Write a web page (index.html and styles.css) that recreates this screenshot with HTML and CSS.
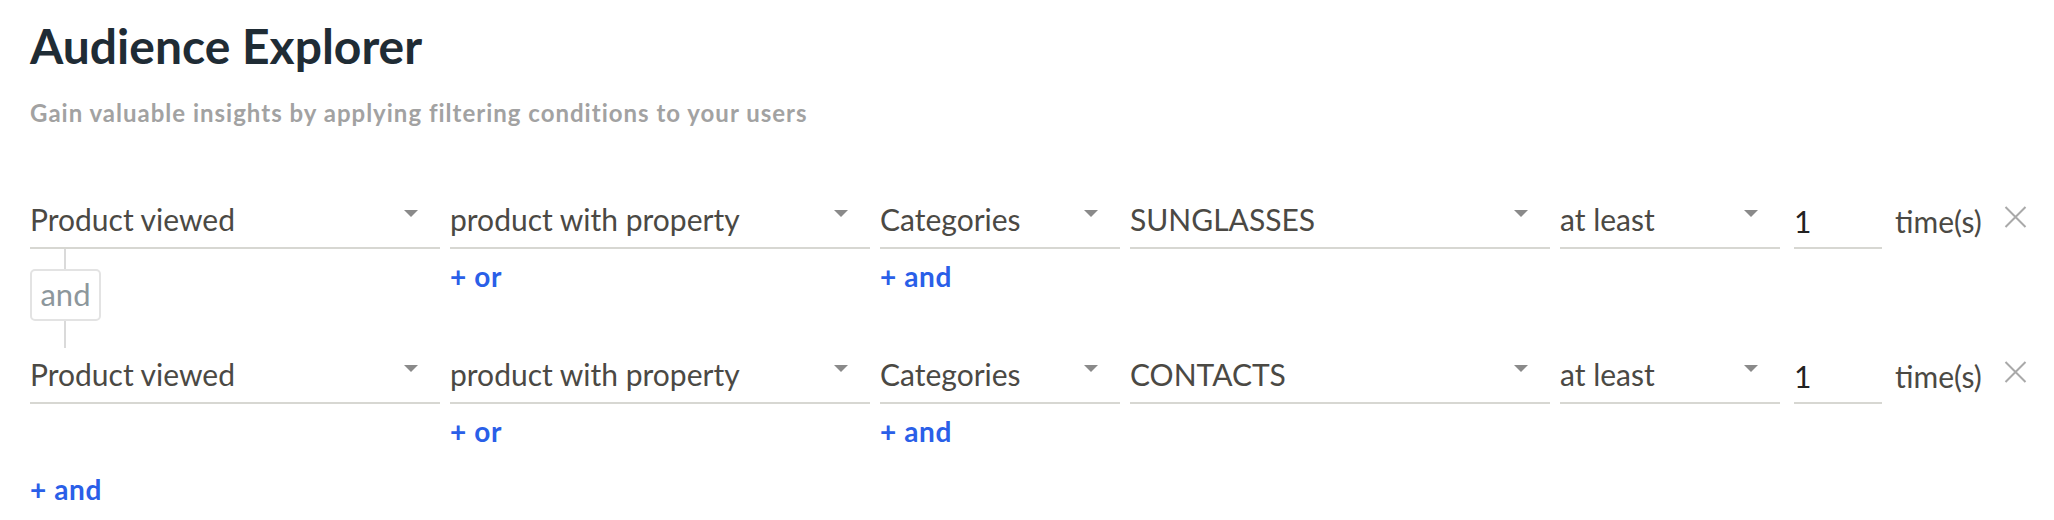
FILE: index.html
```html
<!DOCTYPE html>
<html lang="en">

<head>
    <meta charset="UTF-8">
    <meta name="viewport" content="width=device-width, initial-scale=1.0">
    <title>Audience Explorer</title>
    <link rel="stylesheet" href="styles.css">
</head>

<body>
    <div class="page">
        <h1 class="title">Audience Explorer</h1>
        <p class="subtitle">Gain valuable insights by applying filtering conditions to your users</p>

        <div class="conditions">
            <div class="cond-row">
                <div class="select col-event"><span class="value">Product viewed</span><span class="caret"></span></div>
                <div class="select col-scope"><span class="value">product with property</span><span class="caret"></span></div>
                <div class="select col-prop"><span class="value">Categories</span><span class="caret"></span></div>
                <div class="select col-val"><span class="value">SUNGLASSES</span><span class="caret"></span></div>
                <div class="select col-op"><span class="value">at least</span><span class="caret"></span></div>
                <div class="count">1</div>
                <span class="unit">time(s)</span>
                <span class="remove">
                    <svg width="23" height="22" viewBox="0 0 23 22"><path d="M1.5 1 L21.5 21 M21.5 1 L1.5 21" stroke="#a9a9a9" stroke-width="2" fill="none"/></svg>
                </span>
            </div>
            <div class="sub-row first">
                <div class="col-event connector">
                    <span class="vline top"></span>
                    <span class="and-badge">and</span>
                    <span class="vline bottom"></span>
                </div>
                <div class="col-scope"><a class="link">+ or</a></div>
                <div class="col-prop"><a class="link">+ and</a></div>
            </div>

            <div class="cond-row">
                <div class="select col-event"><span class="value">Product viewed</span><span class="caret"></span></div>
                <div class="select col-scope"><span class="value">product with property</span><span class="caret"></span></div>
                <div class="select col-prop"><span class="value">Categories</span><span class="caret"></span></div>
                <div class="select col-val"><span class="value">CONTACTS</span><span class="caret"></span></div>
                <div class="select col-op"><span class="value">at least</span><span class="caret"></span></div>
                <div class="count">1</div>
                <span class="unit">time(s)</span>
                <span class="remove">
                    <svg width="23" height="22" viewBox="0 0 23 22"><path d="M1.5 1 L21.5 21 M21.5 1 L1.5 21" stroke="#a9a9a9" stroke-width="2" fill="none"/></svg>
                </span>
            </div>
            <div class="sub-row last">
                <div class="col-event"></div>
                <div class="col-scope"><a class="link">+ or</a></div>
                <div class="col-prop"><a class="link">+ and</a></div>
            </div>

            <a class="link add-and">+ and</a>
        </div>
    </div>
</body>

</html>
```

FILE: styles.css
```css
* {
    box-sizing: border-box;
    margin: 0;
    padding: 0;
}

body {
    background: #ffffff;
    font-family: Lato, "Open Sans", sans-serif;
    color: #4b4944;
}

.page {
    padding: 0 30px;
}

.title {
    margin-top: 18px;
    font-size: 48px;
    line-height: 56px;
    font-weight: 700;
    color: #1f2c35;
}

.subtitle {
    margin-top: 25px;
    font-size: 24px;
    line-height: 28px;
    font-weight: 700;
    letter-spacing: 1px;
    color: #a2a2a2;
}

.conditions {
    margin-top: 66px;
}

.cond-row,
.sub-row {
    display: flex;
}

.cond-row {
    height: 56px;
    align-items: flex-end;
}

.cond-row > * {
    flex-shrink: 0;
}

.col-event {
    width: 410px;
}

.col-scope,
.col-val {
    width: 420px;
}

.col-prop {
    width: 240px;
}

.col-op {
    width: 220px;
}

.col-event,
.col-scope,
.col-prop,
.col-val,
.col-op {
    margin-right: 10px;
    flex-shrink: 0;
}

.select {
    height: 56px;
    display: flex;
    align-items: flex-end;
    justify-content: space-between;
    padding: 0 22px 11px 0;
    border-bottom: 2px solid #d7d7d2;
}

.value,
.count,
.unit {
    font-size: 30px;
    line-height: 34px;
}

.caret {
    width: 0;
    height: 0;
    margin-bottom: 19px;
    border-left: 7px solid transparent;
    border-right: 7px solid transparent;
    border-top: 7px solid #8a8a8a;
}

.count {
    width: 88px;
    height: 56px;
    margin-left: 4px;
    padding-top: 11px;
    color: #222222;
    border-bottom: 2px solid #d7d7d2;
}

.unit {
    margin-left: 13px;
    padding-bottom: 11px;
}

.remove {
    display: flex;
    margin-left: 22px;
    margin-bottom: 21px;
}

.sub-row.first {
    height: 99px;
}

.sub-row.last {
    height: 70px;
}

.link {
    display: block;
    margin-top: 12px;
    font-size: 28px;
    line-height: 30px;
    font-weight: 700;
    letter-spacing: 0.6px;
    color: #2a5fe8;
    text-decoration: none;
}

.add-and {
    display: inline-block;
    margin-top: 0;
}

.connector {
    display: flex;
    flex-direction: column;
    align-items: flex-start;
}

.vline {
    width: 2px;
    margin-left: 34px;
    background: #dadada;
}

.vline.top {
    height: 20px;
}

.vline.bottom {
    height: 27px;
}

.and-badge {
    width: 71px;
    height: 52px;
    border: 2px solid #e3e3e3;
    border-radius: 5px;
    font-size: 31px;
    line-height: 46px;
    text-align: center;
    color: #8d979c;
}
```
